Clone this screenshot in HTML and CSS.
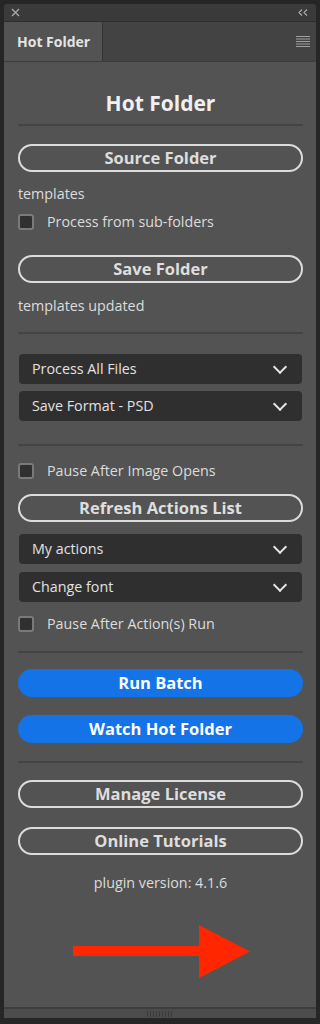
FILE: index.html
```html
<!DOCTYPE html>
<html lang="en">
<head>
  <meta charset="UTF-8">
  <title>Hot Folder</title>
  <link rel="stylesheet" href="styles.css">
</head>
<body>

  <div class="panel">
    <div class="titlebar">
      <svg class="icon-close" width="9" height="9" viewBox="0 0 9 9"><path d="M1 1L8 8M8 1L1 8" stroke="#a8a8a8" stroke-width="1.4" fill="none"/></svg>
      <svg class="icon-collapse" width="10" height="7" viewBox="0 0 10 7"><path d="M4 0.5L1 3.5L4 6.5M9 0.5L6 3.5L9 6.5" stroke="#a8a8a8" stroke-width="1.2" fill="none"/></svg>
    </div>

    <div class="tabbar">
      <div class="tab">Hot Folder</div>
      <svg class="icon-menu" width="14" height="11" viewBox="0 0 14 11"><path d="M0 0.5H14M0 3H14M0 5.5H14M0 8H14M0 10.5H14" stroke="#a0a0a0" stroke-width="1" fill="none"/></svg>
    </div>

    <div class="contenido">
      <h1 class="titulo">Hot Folder</h1>
      <div class="sep s1"></div>

      <button class="btn-outline b-source">Source Folder</button>
      <div class="texto t-templates">templates</div>
      <label class="check c-sub"><span class="caja"></span>Process from sub-folders</label>

      <button class="btn-outline b-save">Save Folder</button>
      <div class="texto t-updated">templates updated</div>
      <div class="sep s2"></div>

      <div class="select d1">Process All Files <span class="chev"></span></div>
      <div class="select d2">Save Format - PSD <span class="chev"></span></div>
      <div class="sep s3"></div>

      <label class="check c-pause1"><span class="caja"></span>Pause After Image Opens</label>
      <button class="btn-outline b-refresh">Refresh Actions List</button>
      <div class="select d3">My actions <span class="chev"></span></div>
      <div class="select d4">Change font <span class="chev"></span></div>
      <label class="check c-pause2"><span class="caja"></span>Pause After Action(s) Run</label>
      <div class="sep s4"></div>

      <button class="btn-azul b-run">Run Batch</button>
      <button class="btn-azul b-watch">Watch Hot Folder</button>
      <div class="sep s5"></div>

      <button class="btn-outline b-license">Manage License</button>
      <button class="btn-outline b-tutorials">Online Tutorials</button>
      <div class="version">plugin version: 4.1.6</div>

      <svg class="flecha" width="178" height="53" viewBox="0 0 178 53">
        <rect x="0" y="21" width="128" height="10" fill="#ff2600"/>
        <polygon points="126,0 177,26.5 126,53" fill="#ff2600"/>
      </svg>
    </div>

    <div class="pie"><span class="grip"></span></div>
  </div>

</body>
</html>
```

FILE: styles.css
```css
:root {
  --fondo: #262626;
  --panel: #535353;
  --barra: #3a3a3a;
  --tabs: #434343;
  --texto: #dcdcdc;
  --linea: #444444;
  --campo: #2f2f2f;
  --azul: #1473e6;
}

body {
  margin: 0;
  background: var(--fondo);
  font-family: 'Open Sans', 'Noto Sans', sans-serif;
  color: var(--texto);
}

.panel {
  margin: 4px 4px 0 4px;
  width: 312px;
  height: 1014px;
  background: var(--panel);
  border-radius: 4px 4px 0 0;
  display: flex;
  flex-direction: column;
  overflow: hidden;
}

/* BARRA SUPERIOR */
.titlebar {
  height: 17px;
  background: var(--barra);
  border-bottom: 1px solid #2e2e2e;
  display: flex;
  align-items: center;
  justify-content: space-between;
  padding: 0 8px 0 7px;
}

.tabbar {
  height: 39px;
  background: var(--tabs);
  display: flex;
  justify-content: space-between;
  align-items: center;
  padding-right: 6px;
  border-bottom: 1px solid #3c3c3c;
}

.tab {
  width: 99px;
  height: 39px;
  background: var(--panel);
  border-right: 1px solid #333;
  font-weight: 700;
  font-size: 14px;
  line-height: 39px;
  padding-left: 13px;
  box-sizing: border-box;
  color: #e4e4e4;
}

/* CONTENIDO */
.contenido {
  flex: 1;
  padding: 0 13px 0 14px;
  display: flex;
  flex-direction: column;
}

.titulo {
  margin: 29px 0 0;
  font-size: 21px;
  line-height: 24px;
  text-align: center;
  color: #f0f0f0;
}

.sep {
  height: 2px;
  background: var(--linea);
}

.btn-outline, .btn-azul {
  font-family: inherit;
  font-size: 16.5px;
  font-weight: 700;
  height: 28px;
  line-height: 20px;
  border-radius: 14px;
  padding: 0;
  width: 285px;
}

.btn-outline {
  background: transparent;
  color: #dedede;
  border: 2px solid #dcdcdc;
}

.btn-azul {
  background: var(--azul);
  color: #fff;
  border: none;
}

.texto {
  font-size: 14.3px;
  line-height: 20px;
}

.check {
  display: flex;
  align-items: center;
  font-size: 14.3px;
  line-height: 20px;
  height: 20px;
}

.caja {
  width: 12px;
  height: 12px;
  border: 2px solid #7a7a7a;
  border-radius: 3px;
  background: #303030;
  margin-right: 13px;
}

.select {
  height: 30px;
  width: 283px;
  margin-left: 1px;
  background: var(--campo);
  border-radius: 4px;
  font-size: 14.3px;
  line-height: 30px;
  padding-left: 13px;
  box-sizing: border-box;
  display: flex;
  justify-content: space-between;
  color: #e2e2e2;
}

.chev {
  width: 8px;
  height: 8px;
  border-right: 2px solid #e6e6e6;
  border-bottom: 2px solid #e6e6e6;
  transform: rotate(45deg);
  margin: 8px 17px 0 0;
}

.version {
  font-size: 14.3px;
  line-height: 20px;
  text-align: center;
  margin-top: 18px;
}

.flecha {
  margin: 32px 0 0 55px;
}

/* ESPACIADOS */
.s1 { margin-top: 9px; }
.b-source { margin-top: 18px; }
.t-templates { margin-top: 12px; }
.c-sub { margin-top: 8px; }
.b-save { margin-top: 23px; }
.t-updated { margin-top: 13px; }
.s2 { margin-top: 16px; }
.d1 { margin-top: 20px; }
.d2 { margin-top: 7px; }
.s3 { margin-top: 23px; }
.c-pause1 { margin-top: 15px; }
.b-refresh { margin-top: 13px; }
.d3 { margin-top: 12px; }
.d4 { margin-top: 8px; }
.c-pause2 { margin-top: 12px; }
.s4 { margin-top: 17px; }
.b-run { margin-top: 16px; }
.b-watch { margin-top: 18px; }
.s5 { margin-top: 18px; }
.b-license { margin-top: 17px; }
.b-tutorials { margin-top: 19px; }

/* PIE */
.pie {
  height: 9px;
  border-top: 2px solid #3e3e3e;
  background: #4c4c4c;
  display: flex;
  justify-content: center;
  align-items: center;
}

.grip {
  width: 27px;
  height: 6px;
  background: repeating-linear-gradient(to right, #3a3a3a 0 1px, transparent 1px 3px);
}
```
